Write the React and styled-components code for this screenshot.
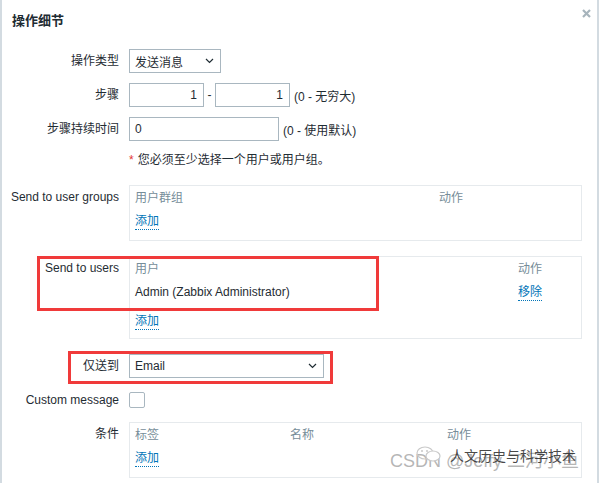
import React from 'react';
import styled, {createGlobalStyle} from 'styled-components';

const Global = createGlobalStyle`
  html, body { margin: 0; padding: 0; background: #fff; }
  body { font-family: "Liberation Sans", Arial, "Noto Sans CJK SC", sans-serif; font-size: 12px; color: #1f2c33; }
`;

const Dialog = styled.div`
  position: relative;
  width: 595px;
  height: 483px;
  border-left: 2px solid #d3dbe1;
  border-right: 2px solid #d3dbe1;
  background: #fff;
  overflow: hidden;
`;

const Title = styled.div`
  padding: 12px 0 0 10px;
  height: 18px;
  line-height: 18px;
  font-size: 13px;
  font-weight: 600;
  color: #1f2c33;
`;

const Close = styled.div`
  position: absolute;
  top: 7px;
  right: 6px;
  width: 9px;
  height: 9px;
`;

const Form = styled.div`
  display: flex;
  flex-direction: column;
  gap: 10px;
  padding: 19px 15px 0 0;
`;

const Row = styled.div`
  position: relative;
  display: grid;
  grid-template-columns: 117px 453px;
  column-gap: 10px;
  align-items: start;
  min-height: 24px;
  margin-bottom: ${p => p.$after || 0}px;
`;

const Label = styled.div`
  text-align: right;
  line-height: 24px;
  white-space: nowrap;
`;

const Field = styled.div`
  display: flex;
  align-items: center;
  min-height: 24px;
`;

const SelectBox = styled.div`
  box-sizing: border-box;
  width: ${p => p.$w}px;
  height: 24px;
  border: 1px solid #a9b7c0;
  display: flex;
  align-items: center;
  justify-content: space-between;
  padding: 0 6px 0 5px;
  background: #fff;
`;

const Input = styled.div`
  box-sizing: border-box;
  width: ${p => p.$w}px;
  height: 24px;
  border: 1px solid #a9b7c0;
  line-height: 22px;
  padding: 0 6px 0 5px;
  text-align: ${p => p.$right ? 'right' : 'left'};
  background: #fff;
`;

const Hint = styled.span`
  margin-left: 4px;
  white-space: nowrap;
`;

const Dash = styled.span`
  width: 11px;
  text-align: center;
`;

const Note = styled.div`
  line-height: 18px;
  height: 24px;
`;

const Star = styled.span`
  color: #e33734;
  margin-right: 4px;
`;

const Box = styled.div`
  box-sizing: border-box;
  width: 453px;
  border: 1px solid #e6eaed;
  padding: 1px 5px ${p => p.$bottom ?? 7}px;
`;

const TRow = styled.div`
  display: grid;
  grid-template-columns: ${p => p.$cols};
  line-height: 23px;
  margin-top: ${p => p.$top || 0}px;
`;

const Head = styled.div`
  color: #768d99;
`;

const Link = styled.span`
  color: #0275b8;
  border-bottom: 1px dotted #0275b8;
  line-height: 15px;
  display: inline-block;
`;

const Check = styled.div`
  box-sizing: border-box;
  width: 16px;
  height: 16px;
  border: 1px solid #a9b7c0;
  border-radius: 2px;
`;

const Highlight = styled.div`
  position: absolute;
  left: ${p => p.$x}px;
  top: ${p => p.$y}px;
  width: ${p => p.$w}px;
  height: ${p => p.$h}px;
  box-sizing: border-box;
  border: 3px solid #f03a3a;
  pointer-events: none;
`;

const Mark = styled.div`
  position: absolute;
  left: 388px;
  top: 445px;
  width: 200px;
  height: 30px;
  pointer-events: none;
`;

const MarkText = styled.div`
  position: absolute;
  left: 0;
  top: 5px;
  font-size: 18px;
  line-height: 22px;
  color: rgba(150, 150, 150, 0.7);
  white-space: nowrap;
`;

const MarkTitle = styled.div`
  position: absolute;
  left: 60px;
  top: 1px;
  font-size: 14px;
  line-height: 18px;
  color: rgba(40, 40, 40, 0.85);
  white-space: nowrap;
  font-family: "Noto Sans CJK SC", sans-serif;
`;

const MarkIcon = styled.svg`
  position: absolute;
  left: 26px;
  top: 1px;
`;

const Chevron = () => (
  <svg width="9" height="6" viewBox="0 0 9 6">
    <path d="M1 1 L4.5 4.5 L8 1" fill="none" stroke="#1f2c33" strokeWidth="1.2"/>
  </svg>
);

export default function App() {
  return (
    <Dialog>
      <Global/>
      <Title>操作细节</Title>
      <Close>
        <svg width="9" height="9" viewBox="0 0 9 9">
          <path d="M1 1 L8 8 M8 1 L1 8" stroke="#a7b4bc" strokeWidth="2.2"/>
        </svg>
      </Close>

      <Form>
        <Row>
          <Label>操作类型</Label>
          <Field>
            <SelectBox $w={92}><span>发送消息</span><Chevron/></SelectBox>
          </Field>
        </Row>

        <Row>
          <Label>步骤</Label>
          <Field>
            <Input $w={75} $right>1</Input>
            <Dash>-</Dash>
            <Input $w={75} $right>1</Input>
            <Hint>(0 - 无穷大)</Hint>
          </Field>
        </Row>

        <Row>
          <Label>步骤持续时间</Label>
          <Field>
            <Input $w={150}>0</Input>
            <Hint>(0 - 使用默认)</Hint>
          </Field>
        </Row>

        <Row>
          <div/>
          <Note><Star>*</Star>您必须至少选择一个用户或用户组。</Note>
        </Row>

        <Row $after={5}>
          <Label>Send to user groups</Label>
          <Box>
            <TRow $cols="304px 1fr"><Head>用户群组</Head><Head>动作</Head></TRow>
            <TRow $cols="1fr"><div><Link>添加</Link></div></TRow>
          </Box>
        </Row>

        <Row $after={5}>
          <Label>Send to users</Label>
          <Box $bottom={5}>
            <TRow $cols="383px 1fr"><Head>用户</Head><Head>动作</Head></TRow>
            <TRow $cols="383px 1fr"><div>Admin (Zabbix Administrator)</div><div><Link>移除</Link></div></TRow>
            <TRow $cols="1fr" $top={6}><div><Link>添加</Link></div></TRow>
          </Box>
          <Highlight $x={35} $y={0} $w={342} $h={55}/>
        </Row>

        <Row>
          <Label>仅送到</Label>
          <Field>
            <SelectBox $w={195}><span>Email</span><Chevron/></SelectBox>
          </Field>
          <Highlight $x={66} $y={-3} $w={265} $h={33}/>
        </Row>

        <Row>
          <Label>Custom message</Label>
          <Field><Check/></Field>
        </Row>

        <Row>
          <Label>条件</Label>
          <Box>
            <TRow $cols="155px 157px 1fr"><Head>标签</Head><Head>名称</Head><Head>动作</Head></TRow>
            <TRow $cols="1fr"><div><Link>添加</Link></div></TRow>
          </Box>
        </Row>
      </Form>

      <Mark>
        <MarkText>CSDN @Jeffy 二河小鱼</MarkText>
        <MarkIcon width="26" height="16" viewBox="0 0 26 16">
          <ellipse cx="9" cy="7" rx="8" ry="6" fill="none" stroke="#c9c9c9" strokeWidth="1.2"/>
          <ellipse cx="17" cy="10" rx="7" ry="5" fill="#fff" stroke="#c9c9c9" strokeWidth="1.2"/>
          <circle cx="6" cy="5" r="1" fill="#c9c9c9"/>
          <circle cx="11" cy="5" r="1" fill="#c9c9c9"/>
        </MarkIcon>
        <MarkTitle>人文历史与科学技术</MarkTitle>
      </Mark>
    </Dialog>
  );
}
